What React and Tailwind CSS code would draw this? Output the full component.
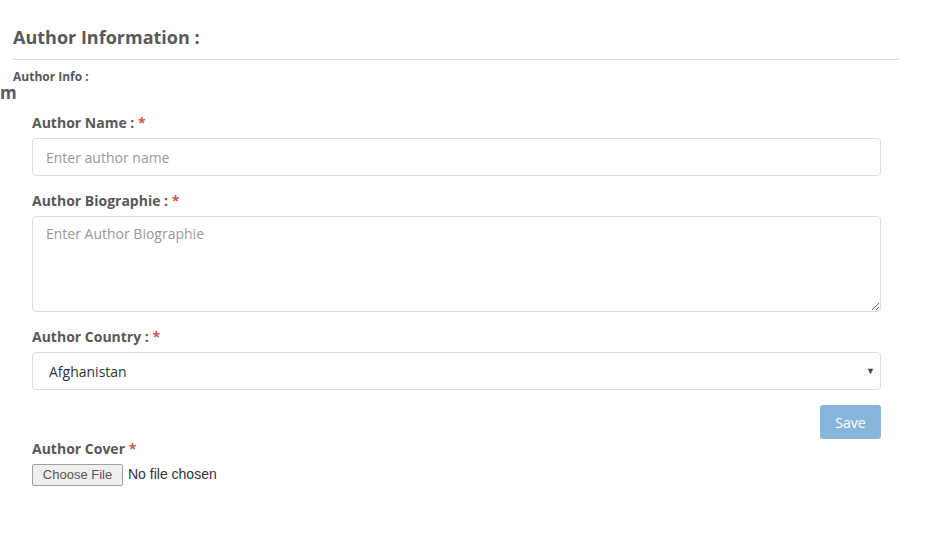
import React from 'react';

const Label = ({ children, star = ' :' }) => (
  <label className="block text-[14px] font-bold leading-[20px] text-[#595959]">
    {children}
    {star} <span className="text-[#d9534f]">*</span>
  </label>
);

const AuthorForm = () => {
  return (
    <div className="w-full min-h-[544px] bg-white font-['Open_Sans',sans-serif] text-[#555]">
      {/* section header */}
      <div className="pt-[25px] pl-[13px]">
        <h2 className="text-[18px] font-bold leading-[24px] text-[#595959]">Author Information :</h2>
      </div>
      <div className="mt-[10px] ml-[12px] w-[888px] border-t border-[#ddd]" />
      <div className="pl-[13px] pt-[10px] text-[12px] font-bold leading-[14px] text-[#595959]">Author Info :</div>
      <div className="text-[17px] font-bold leading-[18px] text-[#595959]">m</div>

      <form className="pl-[32px] pr-[46px] pt-[11px]">
        <Label>Author Name</Label>
        <input
          type="text"
          placeholder="Enter author name"
          className="mt-[5px] block h-[38px] w-full rounded-[4px] border border-[#ddd] px-[13px] text-[14px] text-[#333] placeholder:text-[#999] outline-none"
        />

        <div className="mt-[15px]">
          <Label>Author Biographie</Label>
        </div>
        <textarea
          placeholder="Enter Author Biographie"
          className="mt-[5px] block h-[96px] w-full rounded-[4px] border border-[#ddd] px-[13px] py-[7px] text-[14px] leading-[20px] text-[#333] placeholder:text-[#999] outline-none"
        />

        <div className="mt-[15px]">
          <Label>Author Country</Label>
        </div>
        <div className="relative mt-[5px]">
          <select className="block h-[38px] w-full appearance-none rounded-[4px] border border-[#ddd] bg-white pl-[16px] text-[14px] text-[#333] outline-none">
            <option>Afghanistan</option>
            <option>Albania</option>
            <option>Algeria</option>
          </select>
          <span className="pointer-events-none absolute right-[6px] top-[12px] text-[9px] text-[#444]">▼</span>
        </div>

        <div className="mt-[15px] flex justify-end">
          <button
            type="button"
            className="h-[34px] w-[61px] rounded-[3px] bg-[#89b5da] text-[14px] text-white"
          >
            Save
          </button>
        </div>

        <Label star="">Author Cover</Label>
        <input
          type="file"
          className="mt-[5px] block font-['Liberation_Sans',sans-serif] text-[14px] text-[#333] file:mr-[5px] file:h-[22px] file:w-[91px] file:rounded-[2px] file:border file:border-[#a0a0a0] file:bg-[#efefef] file:text-[13px] file:text-[#555]"
        />
      </form>
    </div>
  );
};

export default function App() {
  return <AuthorForm />;
}
